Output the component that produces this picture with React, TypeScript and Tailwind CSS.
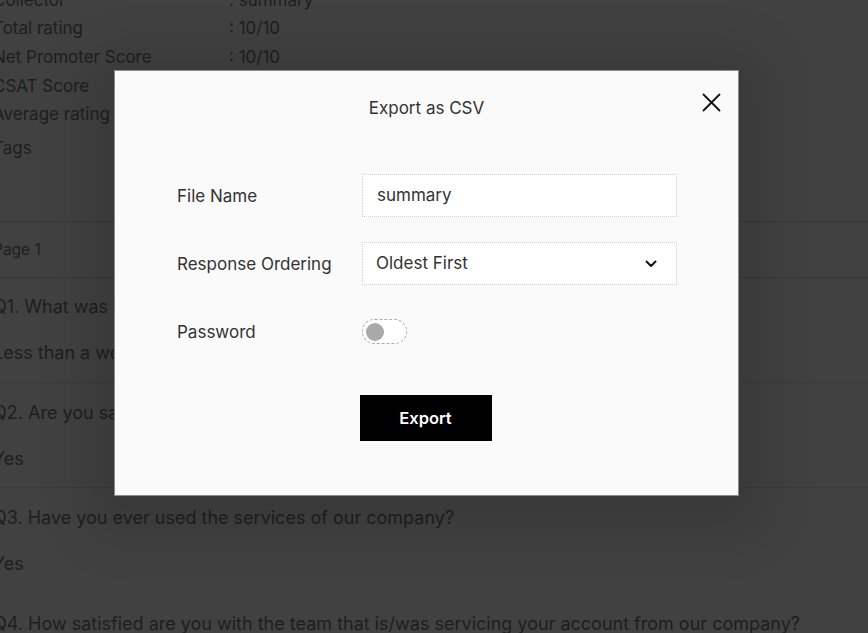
import React from "react";

const font = { fontFamily: "Inter, 'Liberation Sans', sans-serif" };

function InfoRow({ label, value, h }: { label: string; value: string; h: string }) {
  return (
    <div className={`flex items-center ${h}`}>
      <div className="w-[236px] shrink-0">{label}</div>
      <div>{value}</div>
    </div>
  );
}

export default function App() {
  return (
    <div className="relative w-[868px] h-[633px] overflow-hidden bg-[#414141] text-[#1e1e1e]" style={font}>
      {/* Background page */}
      <div className="ml-[-7px] mt-[-14px] text-[17px] leading-none whitespace-nowrap">
        <InfoRow label="Collector" value=": summary" h="h-[28px]" />
        <InfoRow label="Total rating" value=": 10/10" h="h-[29px]" />
        <InfoRow label="Net Promoter Score" value=": 10/10" h="h-[29px]" />
        <InfoRow label="CSAT Score" value="" h="h-[28px]" />
        <InfoRow label="Average rating" value="" h="h-[29px]" />
        <div className="flex items-center h-[38px]">Tags</div>
        <div className="h-[55px] border-b border-[#373737]" />
        <div className="flex items-center h-[56px] border-b border-[#373737] text-[15.5px]">Page 1</div>
        <div className="flex items-center h-[58px] text-[18px]">Q1. What was the</div>
        <div className="flex items-center h-[34px] text-[18px]">Less than a week</div>
        <div className="h-[13px] border-b border-[#3a3a3a]" />
        <div className="flex items-center h-[60px] text-[18px]">Q2. Are you satisfied</div>
        <div className="flex items-center h-[32px] text-[18px]">Yes</div>
        <div className="h-[13px] border-b border-[#3a3a3a]" />
        <div className="flex items-center h-[60px] text-[18px]">Q3. Have you ever used the services of our company?</div>
        <div className="flex items-center h-[32px] text-[18px]">Yes</div>
        <div className="flex items-center h-[88px] text-[18px]">Q4. How satisfied are you with the team that is/was servicing your account from our company?</div>
      </div>

      {/* Modal */}
      <div className="absolute left-[114px] top-[70px] w-[625px] h-[426px] bg-[#fafafa] border border-[#8a8a8a] shadow-[0_10px_50px_25px_rgba(0,0,0,0.13)] text-[#333]">
        <div className="relative h-[74px] flex items-center justify-center pt-[2px]">
          <span className="text-[17px] text-[#333]">Export as CSV</span>
          <button className="absolute right-[17px] top-[21px] w-[20px] h-[20px] flex items-center justify-center">
            <svg width="19" height="19" viewBox="0 0 19 19" fill="none" stroke="#111" strokeWidth="1.8" strokeLinecap="round">
              <path d="M1.5 1.5 L17.5 17.5 M17.5 1.5 L1.5 17.5" />
            </svg>
          </button>
        </div>
        <div className="pl-[62px] pt-[29px] flex flex-col gap-[25px] text-[17px]">
          <div className="flex items-center h-[43px]">
            <div className="w-[185px] pt-[2px]">File Name</div>
            <div className="w-[315px] h-[43px] bg-white border border-dotted border-[#cfcfcf] flex items-center px-[14px] text-[#333]">
              summary
            </div>
          </div>
          <div className="flex items-center h-[43px]">
            <div className="w-[185px] pt-[2px]">Response Ordering</div>
            <div className="w-[315px] h-[43px] bg-white border border-dotted border-[#cfcfcf] flex items-center justify-between pl-[13px] pr-[19px] pt-[1px] text-[#333]">
              <span>Oldest First</span>
              <svg width="12" height="8" viewBox="0 0 12 8" fill="none" stroke="#111" strokeWidth="2" strokeLinecap="round" strokeLinejoin="round">
                <path d="M1.5 1.5 L6 6 L10.5 1.5" />
              </svg>
            </div>
          </div>
          <div className="flex items-center h-[43px]">
            <div className="w-[185px] pt-[2px]">Password</div>
            <div className="w-[45px] h-[25px] rounded-full border border-dashed border-[#aaa] bg-white flex items-center px-[3px]">
              <div className="w-[18px] h-[18px] rounded-full bg-[#a9a9a9]" />
            </div>
          </div>
        </div>
        <div className="flex justify-center pt-[42px] pr-[2px]">
          <button className="w-[132px] h-[46px] bg-black text-white text-[16.5px] font-semibold">Export</button>
        </div>
      </div>
    </div>
  );
}
